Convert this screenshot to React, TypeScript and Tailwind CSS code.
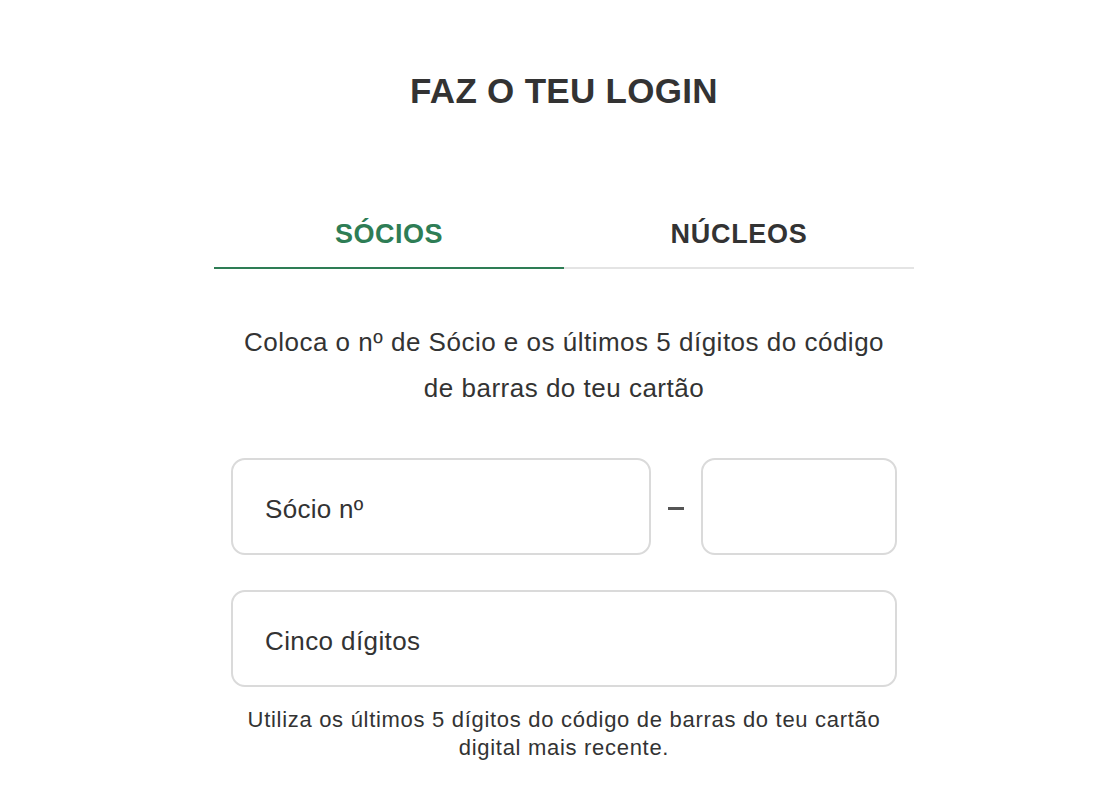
import React, { useState } from 'react';

const font = { fontFamily: '"Liberation Sans", Arial, sans-serif' };

export default function App() {
  const [tab, setTab] = useState<'socios' | 'nucleos'>('socios');

  return (
    <div className="min-h-screen bg-white text-[#333]" style={font}>
      <div className="flex justify-center pl-[10px]">
        <div className="flex w-[700px] flex-col items-center">
          <h1 className="mt-[69px] text-[35px] font-bold leading-[44px] tracking-[0.3px] text-[#333]">
            FAZ O TEU LOGIN
          </h1>

          <div className="mt-[86px] flex w-full">
            <button
              onClick={() => setTab('socios')}
              className={`flex h-[70px] flex-1 items-center justify-center border-b-2 pt-[3px] text-[27px] font-bold tracking-[0.5px] ${
                tab === 'socios' ? 'border-[#2e7d55] text-[#2e7d55]' : 'border-[#e4e4e4] text-[#333]'
              }`}
            >
              SÓCIOS
            </button>
            <button
              onClick={() => setTab('nucleos')}
              className={`flex h-[70px] flex-1 items-center justify-center border-b-2 pt-[3px] text-[27px] font-bold tracking-[0.7px] ${
                tab === 'nucleos' ? 'border-[#2e7d55] text-[#2e7d55]' : 'border-[#e4e4e4] text-[#333]'
              }`}
            >
              NÚCLEOS
            </button>
          </div>

          <p className="mt-[50px] w-[680px] text-center text-[26px] leading-[46px] tracking-[0.5px] text-[#333]">
            Coloca o nº de Sócio e os últimos 5 dígitos do código
            <br />
            de barras do teu cartão
          </p>

          <div className="mt-[47px] flex w-[666px] flex-col gap-[35px]">
            <div className="flex items-center">
              <input
                placeholder="Sócio nº"
                className="h-[97px] w-[420px] rounded-[14px] border-2 border-[#dadada] px-[32px] pt-[5px] text-[26px] tracking-[0.3px] text-[#333] outline-none placeholder:text-[#333]"
              />
              <div className="flex w-[50px] justify-center pt-[3px]">
                <span className="block h-[3px] w-[16px] bg-[#555]" />
              </div>
              <input className="h-[97px] w-[196px] rounded-[14px] border-2 border-[#dadada] px-[20px] pt-[5px] text-[26px] outline-none" />
            </div>
            <input
              placeholder="Cinco dígitos"
              className="h-[97px] w-full rounded-[14px] border-2 border-[#dadada] px-[32px] pt-[5px] text-[26px] tracking-[0.4px] text-[#333] outline-none placeholder:text-[#333]"
            />
          </div>

          <p className="mt-[19px] w-[680px] text-center text-[22px] leading-[28px] tracking-[0.7px] text-[#333]">
            Utiliza os últimos 5 dígitos do código de barras do teu cartão
            <br />
            digital mais recente.
          </p>
        </div>
      </div>
    </div>
  );
}
